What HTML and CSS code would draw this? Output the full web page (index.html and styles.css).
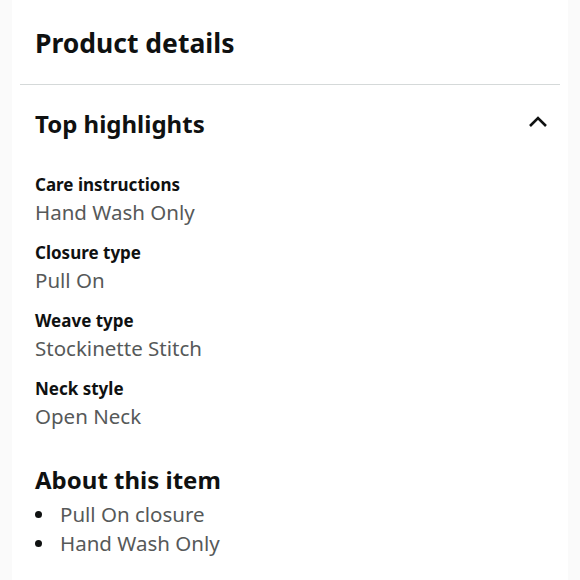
FILE: index.html
```html
<!DOCTYPE html>
<html>
<head>
<meta charset="utf-8">
<link rel="stylesheet" href="styles.css">
</head>
<body>
<div class="page">
  <div class="panel">
    <h1 class="title">Product details</h1>
    <div class="divider"></div>
    <div class="section-head">
      <h2 class="section-title">Top highlights</h2>
      <svg class="chevron" width="20" height="14" viewBox="0 0 20 14"><path d="M2 11 L10 3 L18 11" fill="none" stroke="#0f1111" stroke-width="2.6"/></svg>
    </div>
    <dl class="attrs">
      <div class="attr"><dt>Care instructions</dt><dd>Hand Wash Only</dd></div>
      <div class="attr"><dt>Closure type</dt><dd>Pull On</dd></div>
      <div class="attr"><dt>Weave type</dt><dd>Stockinette Stitch</dd></div>
      <div class="attr"><dt>Neck style</dt><dd>Open Neck</dd></div>
    </dl>
    <h2 class="about-title">About this item</h2>
    <ul class="bullets">
      <li>Pull On closure</li>
      <li>Hand Wash Only</li>
    </ul>
  </div>
</div>
</body>
</html>
```
FILE: styles.css
```css
html, body { margin: 0; padding: 0; }
body {
  background: #fafafa;
  font-family: "Noto Sans", "Liberation Sans", sans-serif;
  color: #0f1111;
}
.page { padding: 0 12px; height: 580px; box-sizing: border-box; }
.panel { background: #fff; height: 100%; padding: 0 8px; box-sizing: border-box; }
.title { margin: 0; padding: 26px 0 0 15px; font-size: 26.5px; font-weight: 700; line-height: 34px; height: 58px; box-sizing: border-box; }
.divider { height: 1px; background: #d5d9d9; margin-top: 26px; }
.section-head { display: flex; align-items: center; justify-content: space-between; padding: 24px 12px 0 15px; }
.section-title { margin: 0; font-size: 24px; font-weight: 700; line-height: 30px; }
.chevron { display: block; margin-top: -4px; }
.attrs { margin: 34px 0 0 15px; display: flex; flex-direction: column; gap: 14px; }
.attr dt { font-size: 17px; font-weight: 700; line-height: 24px; }
.attr dd { margin: 0; font-size: 20.5px; color: #565959; line-height: 30px; }
.about-title { margin: 34px 0 0 15px; font-size: 24px; font-weight: 700; line-height: 30px; }
.bullets { list-style: none; margin: 5px 0 0 15px; padding: 0; font-size: 20.5px; color: #565959; line-height: 29px; }
.bullets li { display: flex; align-items: center; gap: 18px; }
.bullets li::before { content: ""; width: 7px; height: 7px; border-radius: 50%; background: #0f1111; flex: none; }
```
